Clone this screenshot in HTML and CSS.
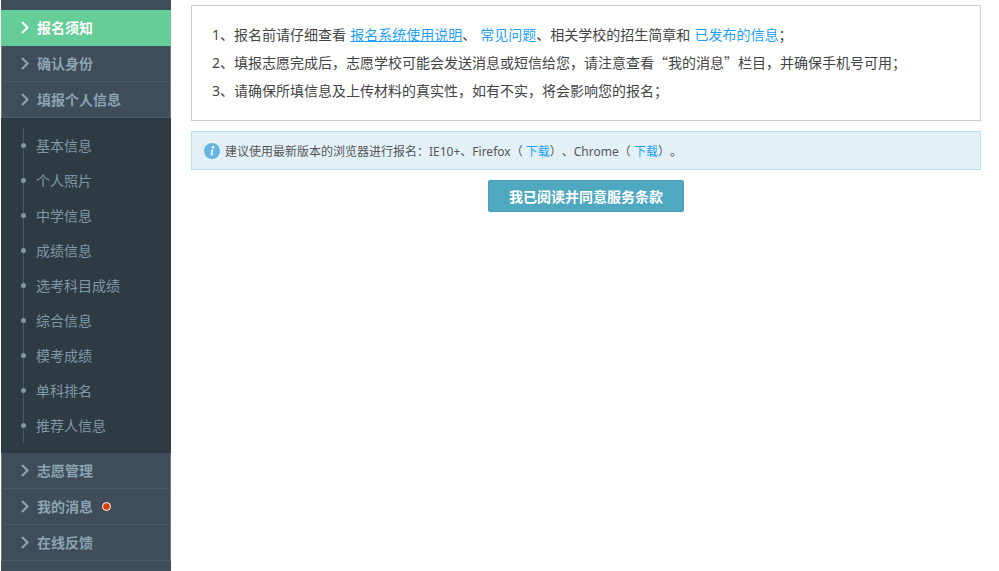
FILE: index.html
```html
<!DOCTYPE html>
<html lang="zh-CN">
<head>
    <meta charset="UTF-8">
    <meta name="viewport" content="width=device-width, initial-scale=1.0">
    <title>报名须知</title>
    <link rel="stylesheet" href="styles.css">
</head>
<body>
    <div id="wrap">
        <div class="side">
            <div class="side-top"></div>
            <a class="menu active"><svg class="arrow" width="8" height="13" viewBox="0 0 8 13"><path d="M1 1l5.500 5.500L1 12"/></svg>报名须知</a>
            <a class="menu"><svg class="arrow" width="8" height="13" viewBox="0 0 8 13"><path d="M1 1l5.500 5.500L1 12"/></svg>确认身份</a>
            <a class="menu"><svg class="arrow" width="8" height="13" viewBox="0 0 8 13"><path d="M1 1l5.500 5.500L1 12"/></svg>填报个人信息</a>
            <div class="sub">
                <ul class="sub-list">
                    <li>基本信息</li>
                    <li>个人照片</li>
                    <li>中学信息</li>
                    <li>成绩信息</li>
                    <li>选考科目成绩</li>
                    <li>综合信息</li>
                    <li>模考成绩</li>
                    <li>单科排名</li>
                    <li>推荐人信息</li>
                </ul>
            </div>
            <a class="menu"><svg class="arrow" width="8" height="13" viewBox="0 0 8 13"><path d="M1 1l5.500 5.500L1 12"/></svg>志愿管理</a>
            <a class="menu"><svg class="arrow" width="8" height="13" viewBox="0 0 8 13"><path d="M1 1l5.500 5.500L1 12"/></svg>我的消息<span class="badge"></span></a>
            <a class="menu"><svg class="arrow" width="8" height="13" viewBox="0 0 8 13"><path d="M1 1l5.500 5.500L1 12"/></svg>在线反馈</a>
        </div>
        <div class="main">
            <div class="notice">
                <p><span class="no">1</span>、报名前请仔细查看 <a class="link under">报名系统使用说明</a>、 <a class="link">常见问题</a>、相关学校的招生简章和 <a class="link">已发布的信息</a>；</p>
                <p><span class="no">2</span>、填报志愿完成后，志愿学校可能会发送消息或短信给您，请注意查看“我的消息”栏目，并确保手机号可用；</p>
                <p><span class="no">3</span>、请确保所填信息及上传材料的真实性，如有不实，将会影响您的报名；</p>
            </div>
            <div class="tip">
                <svg class="tip-icon" width="16" height="16" viewBox="0 0 16 16"><circle cx="8" cy="8" r="8" fill="#66b5e3"/><circle cx="9" cy="4.300" r="1.200" fill="#fff"/><path d="M7.200 6.800h2.100l-1.100 4.600h1l-.3.900H6.600l1.100-4.600h-.8z" fill="#fff"/></svg>
                <span>建议使用最新版本的浏览器进行报名：IE10+、Firefox（ <a class="link">下载</a>）、Chrome（ <a class="link">下载</a>）。</span>
            </div>
            <div class="btn-row">
                <a class="btn">我已阅读并同意服务条款</a>
            </div>
        </div>
    </div>
</body>
</html>
```

FILE: styles.css
```css
html, body {
    margin: 0;
    padding: 0;
    height: 100%;
    overflow: hidden;
    background: #fff;
}
#wrap {
    display: flex;
    height: 571px;
    font-family: "Noto Sans CJK SC", "Noto Sans", sans-serif;
    text-spacing-trim: space-all;
}
.side {
    width: 170px;
    height: 571px;
    margin-left: 1px;
    flex-shrink: 0;
    background: #3e4d59;
}
.side-top {
    height: 10px;
}
.menu {
    display: flex;
    align-items: center;
    box-sizing: border-box;
    height: 36px;
    padding: 0 0 2px 19px;
    border-bottom: 1px solid #4a5a66;
    border-left: 1px solid #6f7a84;
    border-right: 1px solid #6f7a84;
    font-size: 14px;
    font-weight: bold;
    color: #8ba3b4;
}
.menu.active {
    background: #65cd98;
    color: #fff;
    border-color: #65cd98;
}
.arrow {
    margin: 2px 8px 0 0;
    fill: none;
    stroke: currentColor;
    stroke-width: 2.200;
}
.badge {
    width: 7px;
    height: 7px;
    margin: 2px 0 0 9px;
    border: 1px solid #fff;
    border-radius: 50%;
    background: #d9400b;
}
.sub {
    background: #2f3b43;
    padding: 10px 0;
}
.sub-list {
    list-style: none;
    margin: 0 0 0 22px;
    padding: 0;
    border-left: 1px solid #4a5a66;
}
.sub-list li {
    position: relative;
    height: 35px;
    padding-left: 12px;
    font-size: 14px;
    line-height: 35px;
    color: #7f98a8;
}
.sub-list li::before {
    content: "";
    position: absolute;
    left: -3px;
    top: 15px;
    width: 5px;
    height: 5px;
    border-radius: 50%;
    background: #7f98a8;
}
.main {
    width: 790px;
    margin-left: 20px;
}
.notice {
    margin-top: 5px;
    height: 100px;
    padding: 14px 20px 0;
    border: 1px solid #ccc;
    font-size: 14px;
    word-spacing: 1px;
    color: #444;
}
.notice p {
    margin: 0;
    height: 28px;
    line-height: 28px;
}
.no {
    font-family: "Noto Sans", sans-serif;
}
.link {
    color: #1e9fff;
}
.under {
    text-decoration: underline;
}
.tip {
    display: flex;
    align-items: center;
    height: 37px;
    margin-top: 10px;
    padding-left: 12px;
    border: 1px solid #b1e3ec;
    background: #e3f1f7;
    font-family: "Noto Sans", "Noto Sans CJK SC", sans-serif;
    font-size: 12px;
    color: #555;
}
.tip-icon {
    margin-right: 5px;
}
.btn-row {
    display: flex;
    justify-content: center;
    margin-top: 10px;
}
.btn {
    box-sizing: border-box;
    width: 196px;
    height: 32px;
    border: 1px solid #489cb3;
    border-radius: 2px;
    background: #4ea8c0;
    font-size: 14px;
    font-weight: bold;
    line-height: 30px;
    text-align: center;
    color: #fff;
}
```
